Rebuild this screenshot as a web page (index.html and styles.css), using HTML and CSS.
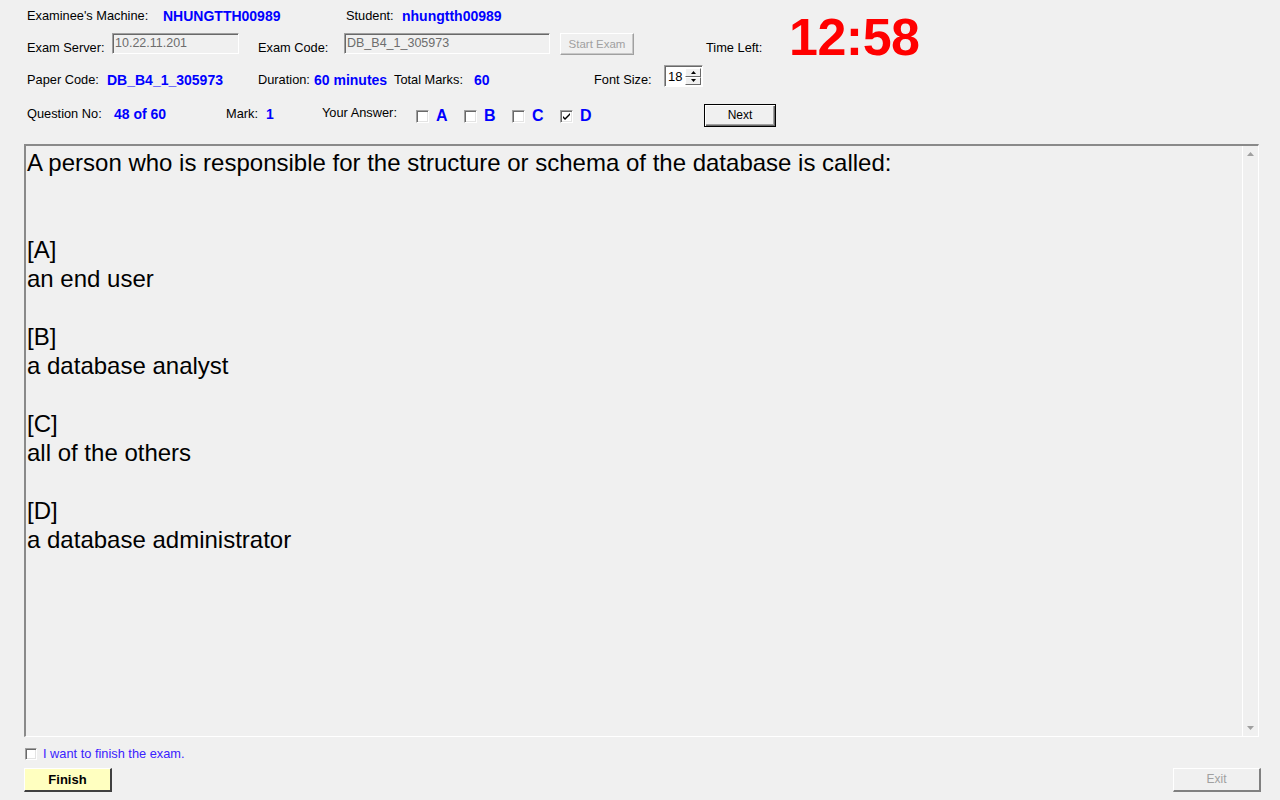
FILE: index.html
```html
<!DOCTYPE html>
<html>
<head>
<meta charset="utf-8">
<title>Exam Client</title>
<link rel="stylesheet" href="styles.css">
</head>
<body>
<div class="app">
  <div class="header">
    <div class="row r1">
      <span class="lbl w-machine">Examinee's Machine:</span>
      <span class="val w-machval">NHUNGTTH00989</span>
      <span class="lbl w-student">Student:</span>
      <span class="val">nhungtth00989</span>
    </div>
    <div class="row r2">
      <span class="lbl low w-server">Exam Server:</span>
      <span class="input w-srvin">10.22.11.201</span>
      <span class="lbl low w-code">Exam Code:</span>
      <span class="input w-codein">DB_B4_1_305973</span>
      <span class="btn-dis w-start">Start Exam</span>
      <span class="lbl low w-left">Time Left:</span>
      <span class="timer">12:58</span>
    </div>
    <div class="row r3">
      <span class="lbl mid w-paper">Paper Code:</span>
      <span class="val mid w-paperval">DB_B4_1_305973</span>
      <span class="lbl mid w-dur">Duration:</span>
      <span class="val mid w-durval">60 minutes</span>
      <span class="lbl mid w-total">Total Marks:</span>
      <span class="val mid w-totalval">60</span>
      <span class="lbl mid w-font">Font Size:</span>
      <span class="spin">
        <span class="spin-val">18</span>
        <span class="spin-btns">
          <span class="spin-b"><svg width="5" height="3" viewBox="0 0 5 3"><path d="M2.5 0L5 3H0z" fill="#000"/></svg></span>
          <span class="spin-b"><svg width="5" height="3" viewBox="0 0 5 3"><path d="M0 0H5L2.5 3z" fill="#000"/></svg></span>
        </span>
      </span>
    </div>
    <div class="row r4">
      <span class="lbl hi w-qno">Question No:</span>
      <span class="val hi w-qval">48 of 60</span>
      <span class="lbl hi w-mark">Mark:</span>
      <span class="val hi w-markval">1</span>
      <span class="lbl up w-answer">Your Answer:</span>
      <span class="opt"><span class="cb"></span><span class="opt-l">A</span></span>
      <span class="opt"><span class="cb"></span><span class="opt-l">B</span></span>
      <span class="opt"><span class="cb"></span><span class="opt-l">C</span></span>
      <span class="opt opt-last"><span class="cb"><svg width="9" height="9" viewBox="0 0 9 9"><path d="M1 4l2 2 5-5v2l-5 5-2-2z" fill="#000"/></svg></span><span class="opt-l">D</span></span>
      <span class="btn-next">Next</span>
    </div>
  </div>

  <div class="question">
    <div class="q-text">
      <p>A person who is responsible for the structure or schema of the database is called:</p>
      <p>&nbsp;</p>
      <p>&nbsp;</p>
      <p>[A]</p>
      <p>an end user</p>
      <p>&nbsp;</p>
      <p>[B]</p>
      <p>a database analyst</p>
      <p>&nbsp;</p>
      <p>[C]</p>
      <p>all of the others</p>
      <p>&nbsp;</p>
      <p>[D]</p>
      <p>a database administrator</p>
    </div>
    <div class="scroll">
      <svg class="arr" width="7" height="4" viewBox="0 0 7 4"><path d="M3.5 0L7 4H0z" fill="#a0a0a0"/></svg>
      <svg class="arr" width="7" height="4" viewBox="0 0 7 4"><path d="M0 0H7L3.5 4z" fill="#a0a0a0"/></svg>
    </div>
  </div>

  <div class="finish-check">
    <span class="cb small"></span>
    <span class="finish-lbl">I want to finish the exam.</span>
  </div>
  <div class="bottom">
    <span class="btn-finish">Finish</span>
    <span class="btn-exit">Exit</span>
  </div>
</div>
</body>
</html>
```

FILE: styles.css
```css
* { box-sizing: border-box; }
html, body {
  margin: 0;
  padding: 0;
  background: #f0f0f0;
  width: 1280px;
  height: 800px;
  overflow: hidden;
  font-family: "Liberation Sans", Arial, sans-serif;
}
.app { width: 1280px; height: 800px; }
.header { padding-left: 27px; }
.row { display: flex; align-items: center; white-space: nowrap; }
.r1 { height: 20px; margin-top: 6px; }
.r2 { height: 21px; margin-top: 7px; align-items: flex-start; }
.r3 { height: 21px; margin-top: 11px; align-items: flex-start; }
.r4 { height: 22px; margin-top: 18px; }

.lbl { font-size: 12.8px; color: #000; line-height: 14px; }
.val { font-size: 14px; font-weight: bold; color: #0000ff; line-height: 16px; }
.low { margin-top: 8px; }
.mid { margin-top: 8px; }
.val.mid { margin-top: 7px; }
.hi { margin-top: -3px; }
.up { margin-top: -5px; }

.w-machine { width: 136px; }
.w-machval { width: 183px; }
.w-student { width: 56px; }

.w-server { width: 85px; }
.w-srvin { width: 127px; margin-right: 19px; }
.w-code { width: 86px; }
.w-codein { width: 206px; margin-right: 10px; }
.w-start { width: 74px; margin-right: 72px; }
.w-left { width: 83px; margin-top: 8px; }

.input {
  height: 21px;
  background: #f0f0f0;
  border-top: 1px solid #a0a0a0;
  border-left: 1px solid #a0a0a0;
  border-right: 1px solid #ffffff;
  border-bottom: 1px solid #ffffff;
  box-shadow: inset 1px 1px 0 #696969;
  color: #6d6d6d;
  font-size: 12.5px;
  line-height: 18px;
  padding-left: 2px;
}
.btn-dis {
  height: 22px;
  border-top: 1px solid #ffffff;
  border-left: 1px solid #ffffff;
  border-right: 1px solid #a0a0a0;
  border-bottom: 1px solid #a0a0a0;
  box-shadow: inset -1px -1px 0 #c8c8c8;
  color: #a0a0a0;
  font-size: 11.5px;
  line-height: 20px;
  text-align: center;
}
.timer {
  font-size: 52px;
  font-weight: bold;
  color: #ff0000;
  line-height: 52px;
  margin-top: -22px;
  letter-spacing: -0.5px;
}

.w-paper { width: 80px; }
.w-paperval { width: 151px; }
.w-dur { width: 56px; }
.w-durval { width: 80px; }
.w-total { width: 80px; }
.w-totalval { width: 120px; }
.w-font { width: 70px; }

.spin {
  display: flex;
  width: 39px;
  height: 22px;
  background: #ffffff;
  border-top: 1px solid #a0a0a0;
  border-left: 1px solid #a0a0a0;
  border-right: 1px solid #ffffff;
  border-bottom: 1px solid #ffffff;
  box-shadow: inset 1px 1px 0 #696969;
  padding: 2px 1px 1px 3px;
}
.spin-val { font-size: 13px; line-height: 17px; flex: 1; }
.spin-btns { display: flex; flex-direction: column; width: 16px; }
.spin-b {
  flex: 1;
  display: flex;
  align-items: center;
  justify-content: center;
  background: #f0f0f0;
  border-top: 1px solid #fff;
  border-left: 1px solid #fff;
  border-right: 1px solid #696969;
  border-bottom: 1px solid #696969;
}

.w-qno { width: 87px; }
.w-qval { width: 112px; }
.w-mark { width: 40px; }
.w-markval { width: 56px; }
.w-answer { width: 94px; }

.opt { display: flex; align-items: center; width: 48px; margin-top: 2px; }
.opt-last { width: 144px; }
.cb {
  width: 13px;
  height: 13px;
  background: #ffffff;
  border-top: 1px solid #a0a0a0;
  border-left: 1px solid #a0a0a0;
  border-right: 1px solid #ffffff;
  border-bottom: 1px solid #ffffff;
  box-shadow: inset 1px 1px 0 #696969, inset -1px -1px 0 #e3e3e3;
  display: flex;
  align-items: center;
  justify-content: center;
}
.opt-l { font-size: 16px; font-weight: bold; color: #0000ff; margin-left: 7px; line-height: 18px; }

.btn-next {
  width: 72px;
  height: 23px;
  border: 1px solid #000;
  box-shadow: inset 1px 1px 0 #fff, inset -1px -1px 0 #696969, inset -2px -2px 0 #a0a0a0;
  font-size: 12px;
  line-height: 21px;
  text-align: center;
  margin-top: 0;
}

.question {
  margin: 18px 0 0 24px;
  width: 1235px;
  height: 593px;
  display: flex;
  border-top: 2px solid #8a8a8a;
  border-left: 2px solid #8a8a8a;
  border-right: 1px solid #ffffff;
  border-bottom: 1px solid #ffffff;
}
.q-text {
  flex: 1;
  padding: 2px 0 0 1px;
  font-family: "Liberation Sans", Arial, sans-serif;
  font-size: 24px;
  color: #000;
}
.q-text p { margin: 0; line-height: 29px; height: 29px; }
.scroll {
  width: 15px;
  display: flex;
  flex-direction: column;
  justify-content: space-between;
  align-items: center;
  padding: 6px 0 6px;
  border-left: 1px solid #ffffff;
  background: #f0f0f0;
  margin-right: 1px;
}

.finish-check { display: flex; align-items: center; margin: 10px 0 0 25px; height: 13px; }
.cb.small { width: 12px; height: 12px; }
.finish-lbl { font-size: 12.8px; color: #3a22ff; margin-left: 6px; line-height: 14px; }

.bottom { display: flex; justify-content: space-between; margin: 8px 19px 0 24px; }
.btn-finish {
  width: 88px;
  height: 24px;
  background: #ffffc0;
  border-top: 1px solid #ffffff;
  border-left: 1px solid #ffffff;
  border-right: 2px solid #404040;
  border-bottom: 2px solid #404040;
  font-size: 13px;
  font-weight: bold;
  text-align: center;
  line-height: 21px;
}
.btn-exit {
  width: 88px;
  height: 24px;
  border-top: 1px solid #ffffff;
  border-left: 1px solid #ffffff;
  border-right: 2px solid #808080;
  border-bottom: 2px solid #808080;
  color: #a0a0a0;
  font-size: 12px;
  text-align: center;
  line-height: 21px;
}
```
